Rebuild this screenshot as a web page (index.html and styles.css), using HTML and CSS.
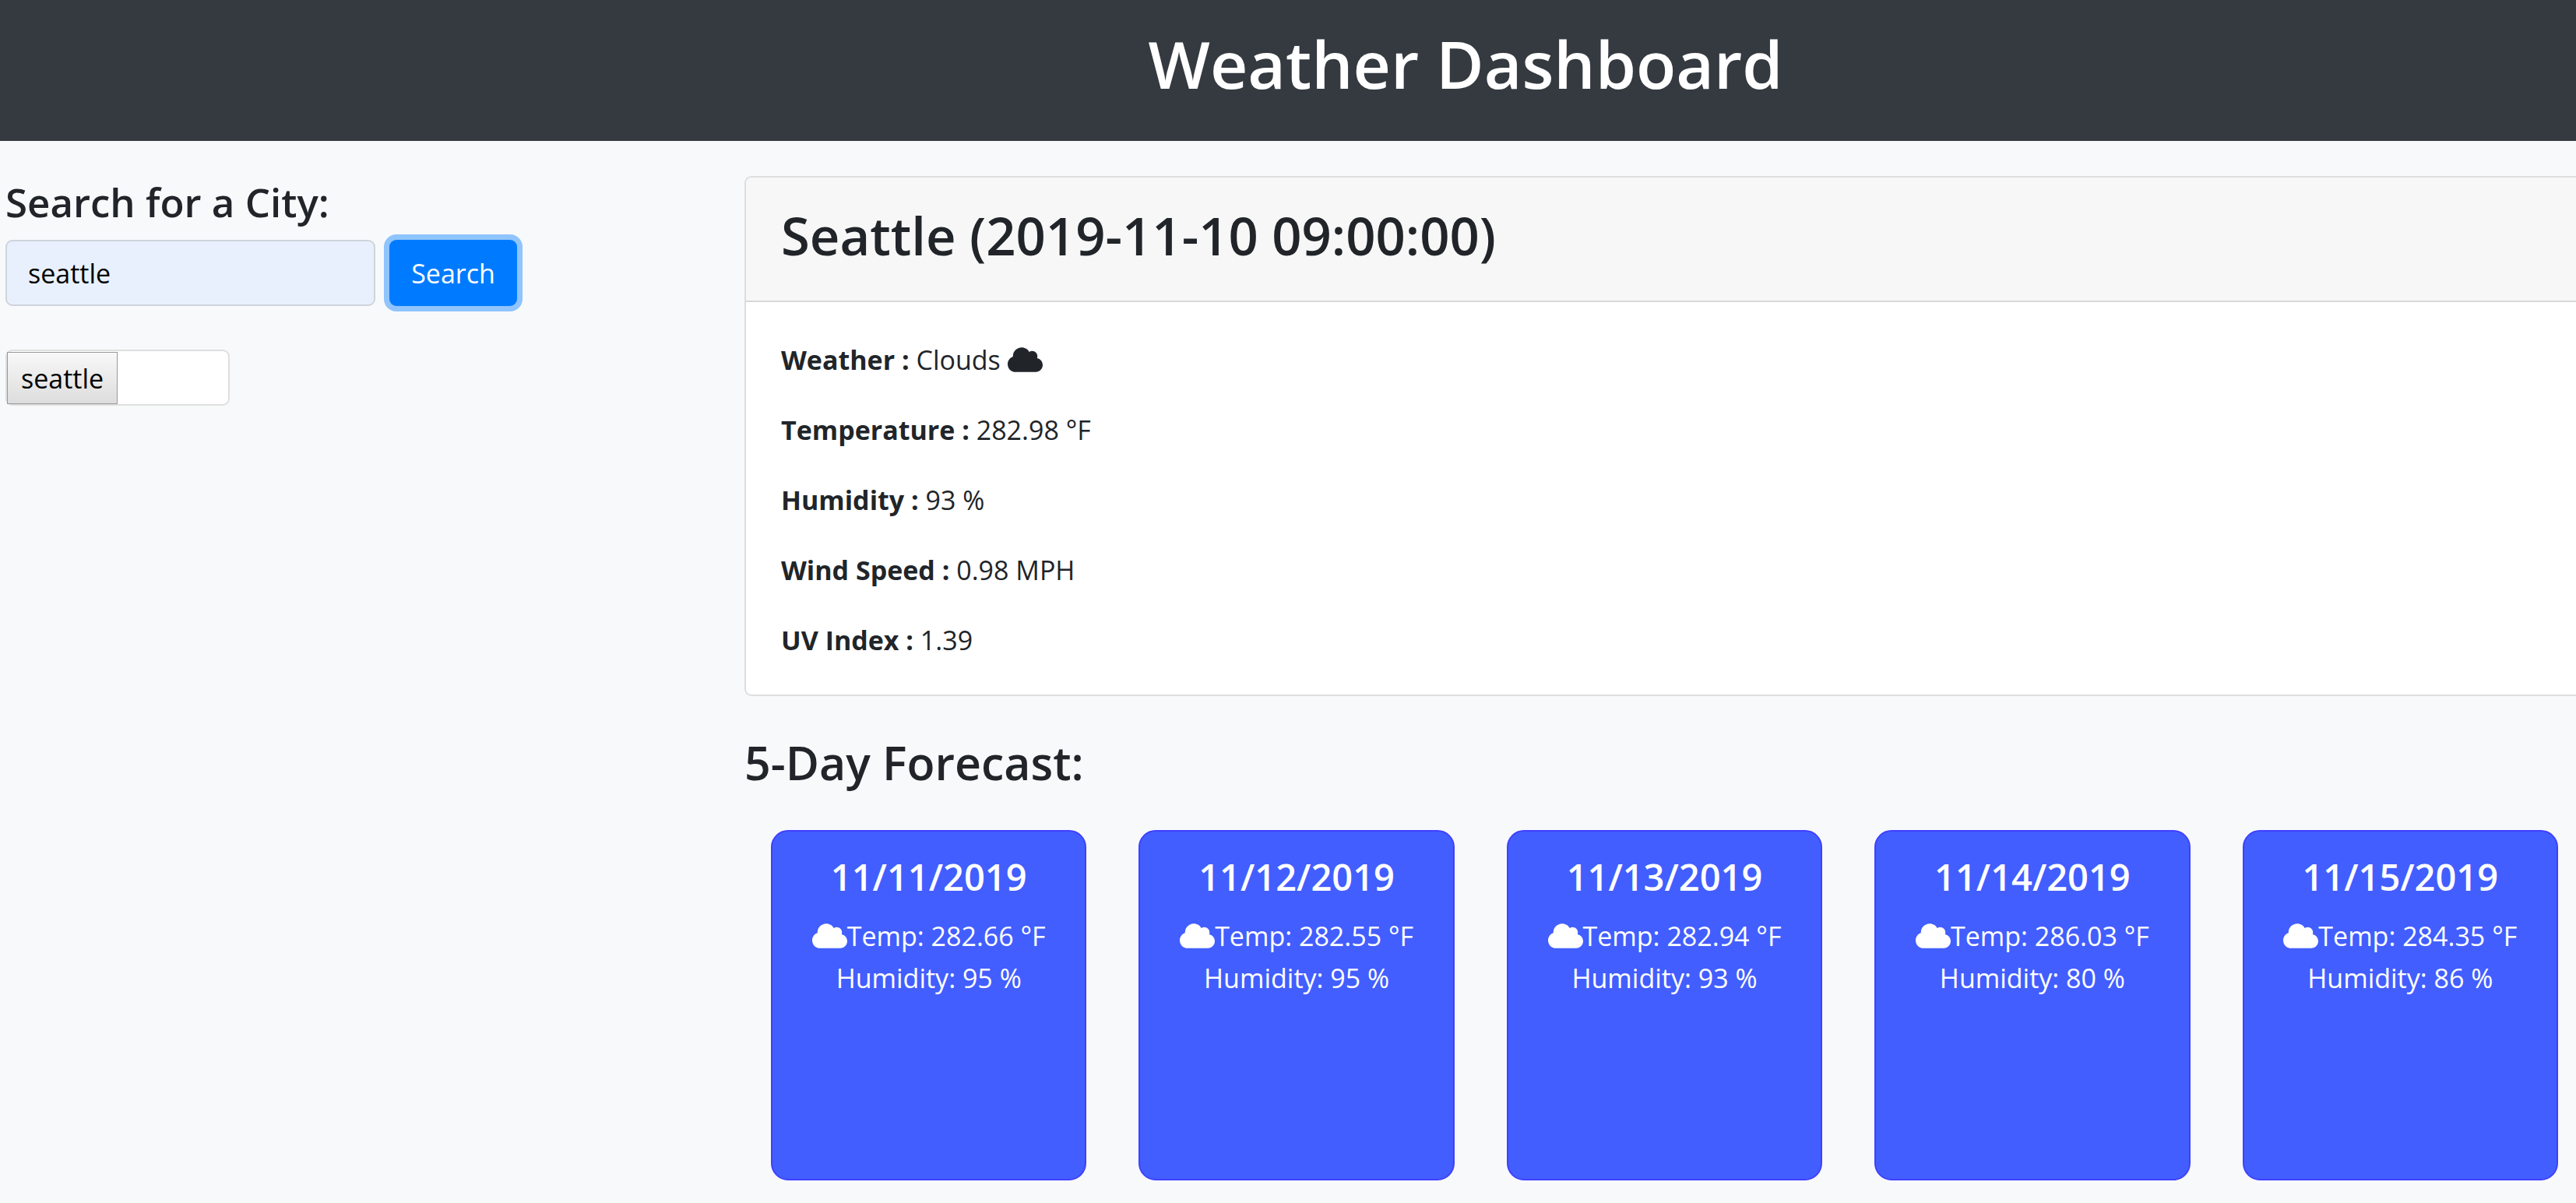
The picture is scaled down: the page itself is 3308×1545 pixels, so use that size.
FILE: index.html
```
<!DOCTYPE html>
<html lang="en">
<head>
<meta charset="utf-8">
<title>Weather Dashboard</title>
<link rel="stylesheet" href="styles.css">
</head>
<body>
<svg class="sprite" aria-hidden="true">
  <symbol id="cloud" viewBox="0 0 640 512"><path fill="currentColor" d="M537.6 226.6c4.1-10.7 6.4-22.4 6.4-34.6 0-53-43-96-96-96-19.7 0-38.1 6-53.3 16.2C367 64.2 315.3 32 256 32c-88.4 0-160 71.6-160 160 0 2.7.1 5.4.2 8.1C40.2 219.8 0 273.2 0 336c0 79.5 64.5 144 144 144h368c70.7 0 128-57.3 128-128 0-61.9-44-113.6-102.4-125.4z"/></symbol>
</svg>
<header class="banner"><h1 class="banner-title">Weather Dashboard</h1></header>
<div class="layout">
  <aside class="sidebar">
    <form class="search" onsubmit="return false">
      <label class="search-label" for="city">Search for a City:</label>
      <div class="search-row">
        <input class="search-input" id="city" type="text" value="seattle">
        <button class="search-button" type="submit">Search</button>
      </div>
    </form>
    <ul class="history">
      <li class="history-item"><button class="history-button" type="button">seattle</button></li>
    </ul>
  </aside>
  <main class="content">
    <section class="current">
      <h2 class="current-title">Seattle (2019-11-10 09:00:00)</h2>
      <div class="current-body">
        <p class="reading"><b>Weather :</b> Clouds <svg class="cloud"><use href="#cloud"/></svg></p>
        <p class="reading"><b>Temperature :</b> 282.98 °F</p>
        <p class="reading"><b>Humidity :</b> 93 %</p>
        <p class="reading"><b>Wind Speed :</b> 0.98 MPH</p>
        <p class="reading"><b>UV Index :</b> 1.39</p>
      </div>
    </section>
    <h3 class="forecast-title">5-Day Forecast:</h3>
    <section class="forecast">
      <article class="day">
        <h4 class="day-date">11/11/2019</h4>
        <p class="day-line"><svg class="cloud"><use href="#cloud"/></svg>Temp: 282.66 °F</p>
        <p class="day-line">Humidity: 95 %</p>
      </article>
      <article class="day">
        <h4 class="day-date">11/12/2019</h4>
        <p class="day-line"><svg class="cloud"><use href="#cloud"/></svg>Temp: 282.55 °F</p>
        <p class="day-line">Humidity: 95 %</p>
      </article>
      <article class="day">
        <h4 class="day-date">11/13/2019</h4>
        <p class="day-line"><svg class="cloud"><use href="#cloud"/></svg>Temp: 282.94 °F</p>
        <p class="day-line">Humidity: 93 %</p>
      </article>
      <article class="day">
        <h4 class="day-date">11/14/2019</h4>
        <p class="day-line"><svg class="cloud"><use href="#cloud"/></svg>Temp: 286.03 °F</p>
        <p class="day-line">Humidity: 80 %</p>
      </article>
      <article class="day">
        <h4 class="day-date">11/15/2019</h4>
        <p class="day-line"><svg class="cloud"><use href="#cloud"/></svg>Temp: 284.35 °F</p>
        <p class="day-line">Humidity: 86 %</p>
      </article>
    </section>
  </main>
</div>
</body>
</html>
```
FILE: styles.css
```
* { box-sizing: border-box; }
body {
  margin: 0;
  background: #f8f9fb;
  color: #212529;
  font: 400 34px/54px "Open Sans", "Noto Sans", sans-serif;
}
h1, h2, h3, h4, p, ul { margin: 0; padding: 0; }
.sprite { display: none; }

.banner {
  padding: 28px 0 45px 456px;
  background: #343a40;
  color: #fff;
  text-align: center;
}
.banner-title { font-size: 84px; line-height: 108px; font-weight: 600; }

.layout { display: flex; padding: 45px 23px 29px 7px; }
.sidebar { flex: 0 0 949px; }
.content { flex: 1; min-width: 0; }

.search-label {
  display: block;
  margin-bottom: 16px;
  font-size: 51px;
  line-height: 66px;
  font-weight: 600;
}
.search-row { display: flex; gap: 18px; }
.search-input {
  width: 475px;
  height: 85px;
  padding: 0 27px;
  border: 2px solid #ced4da;
  border-radius: 9px;
  background: #e8f0fe;
  color: #000;
  font: inherit;
}
.search-button {
  width: 164px;
  height: 85px;
  padding: 0;
  border: 0;
  border-radius: 9px;
  background: #007bff;
  box-shadow: 0 0 0 7px rgba(38, 143, 255, .5);
  color: #fff;
  font: inherit;
}
.history {
  width: 288px;
  margin-top: 56px;
  list-style: none;
}
.history-item {
  display: flex;
  padding: 1px 0 0;
  border: 2px solid #dfdfdf;
  border-radius: 9px;
  background: #fff;
}
.history-button {
  height: 67px;
  padding: 0 17px;
  border: 1px solid #999;
  background: linear-gradient(#f8f8f8, #ddd);
  color: #000;
  font: inherit;
}

/* The card bleeds off the right edge of the page. */
.current {
  margin-right: -23px;
  border: 2px solid #dddedf;
  border-right: 0;
  border-radius: 9px 0 0 9px;
  background: #fff;
}
.current-title {
  padding: 31px 45px 41px;
  border-bottom: 2px solid #d8d8d8;
  border-radius: 7px 0 0 0;
  background: #f7f7f7;
  font-size: 67px;
  line-height: 86px;
  font-weight: 600;
}
.current-body {
  display: grid;
  gap: 36px;
  padding: 47px 45px 43px;
}
.reading b { font-weight: 700; }
.cloud {
  width: 45px;
  height: 36px;
  vertical-align: -5px;
}

.forecast-title {
  margin: 47px 0 49px;
  font-size: 59px;
  line-height: 76px;
  font-weight: 600;
}
.forecast {
  display: grid;
  grid-template-columns: repeat(5, 1fr);
  gap: 67px;
  padding-left: 34px;
}
.day {
  min-height: 450px;
  padding: 26px 0;
  border: 2px solid #4040ff;
  border-radius: 22px;
  background: #425eff;
  color: #fff;
  text-align: center;
}
.day-date {
  margin-bottom: 17px;
  font-size: 47px;
  line-height: 64px;
  font-weight: 600;
}
```
